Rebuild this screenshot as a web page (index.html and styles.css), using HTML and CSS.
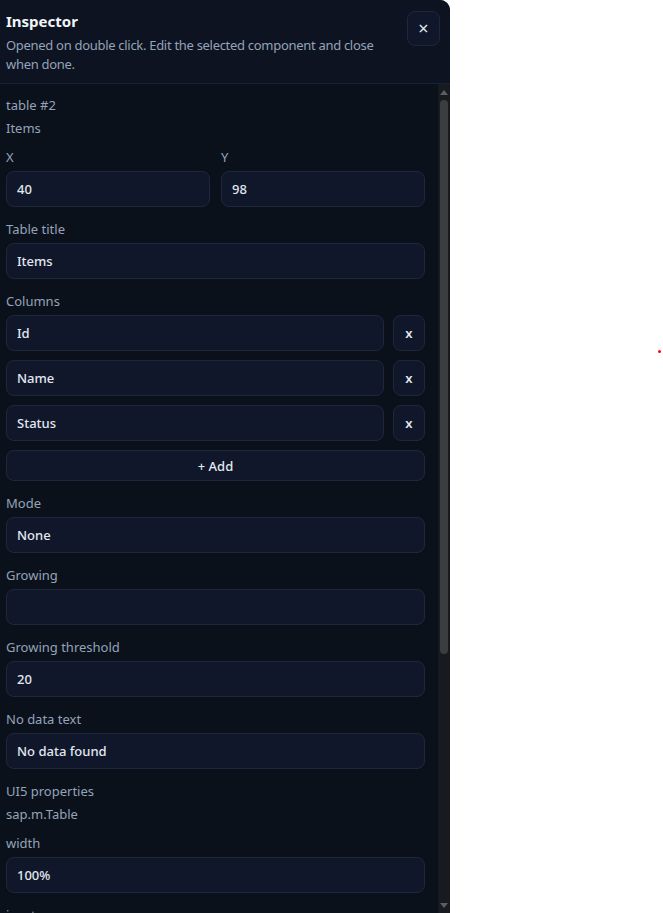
FILE: index.html
```html
<!DOCTYPE html>
<html lang="en">
<head>
  <meta charset="UTF-8">
  <title>Inspector</title>
  <link rel="stylesheet" href="styles.css">
</head>
<body>

<aside class="inspector">
  <header class="inspector-head">
    <div>
      <h2 class="inspector-title">Inspector</h2>
      <p class="inspector-desc">Opened on double click. Edit the selected component and close when done.</p>
    </div>
    <button class="close-btn" aria-label="Close">&times;</button>
  </header>

  <div class="inspector-main">
    <div class="inspector-body">
      <div class="meta">
        <span>table #2</span>
        <span>Items</span>
      </div>

      <div class="row-2">
        <label class="field">
          <span class="field-label">X</span>
          <input class="input" type="text" value="40">
        </label>
        <label class="field">
          <span class="field-label">Y</span>
          <input class="input" type="text" value="98">
        </label>
      </div>

      <label class="field">
        <span class="field-label">Table title</span>
        <input class="input" type="text" value="Items">
      </label>

      <div class="field">
        <span class="field-label">Columns</span>
        <div class="columns">
          <div class="col-row">
            <input class="input" type="text" value="Id">
            <button class="small-btn">x</button>
          </div>
          <div class="col-row">
            <input class="input" type="text" value="Name">
            <button class="small-btn">x</button>
          </div>
          <div class="col-row">
            <input class="input" type="text" value="Status">
            <button class="small-btn">x</button>
          </div>
          <button class="add-btn">+ Add</button>
        </div>
      </div>

      <label class="field">
        <span class="field-label">Mode</span>
        <input class="input" type="text" value="None">
      </label>

      <label class="field">
        <span class="field-label">Growing</span>
        <input class="input" type="text" value="">
      </label>

      <label class="field">
        <span class="field-label">Growing threshold</span>
        <input class="input" type="text" value="20">
      </label>

      <label class="field">
        <span class="field-label">No data text</span>
        <input class="input" type="text" value="No data found">
      </label>

      <div class="meta">
        <span>UI5 properties</span>
        <span>sap.m.Table</span>
      </div>

      <label class="field">
        <span class="field-label">width</span>
        <input class="input" type="text" value="100%">
      </label>

      <label class="field">
        <span class="field-label">inset</span>
        <input class="input" type="text" value="false">
      </label>

      <label class="field">
        <span class="field-label">sticky</span>
        <input class="input" type="text" value="">
      </label>
    </div>

    <div class="scrollbar">
      <span class="sb-arrow sb-up"></span>
      <div class="sb-track">
        <div class="sb-thumb"></div>
      </div>
      <span class="sb-arrow sb-down"></span>
    </div>
  </div>
</aside>

<div class="marker"></div>

</body>
</html>
```

FILE: styles.css
```css
* {
  box-sizing: border-box;
}
body {
  margin: 0;
  background: #fff;
  font-family: "Noto Sans", "Open Sans", sans-serif;
  font-size: 13px;
}
.inspector {
  width: 450px;
  height: 913px;
  background: #0b111b;
  border-top-right-radius: 10px;
  display: flex;
  flex-direction: column;
  overflow: hidden;
}
.inspector-head {
  display: flex;
  justify-content: space-between;
  align-items: flex-start;
  gap: 8px;
  padding: 11px 10px 9px 6px;
  border-bottom: 1px solid #1a2231;
  background: #0d1320;
}
.inspector-title {
  margin: 0;
  font-size: 15px;
  line-height: 20px;
  font-weight: 700;
  color: #f1f5f9;
}
.inspector-desc {
  margin: 5px 0 0;
  max-width: 385px;
  font-size: 13px;
  line-height: 19px;
  letter-spacing: -0.3px;
  color: #94a3b8;
}
.close-btn {
  flex: 0 0 33px;
  height: 35px;
  border: 1px solid #1f283b;
  border-radius: 8px;
  background: #10172b;
  color: #e2e8f0;
  font-size: 18px;
  line-height: 1;
  font-family: inherit;
  padding: 0 0 2px;
}
.inspector-main {
  flex: 1;
  min-height: 0;
  display: flex;
}
.inspector-body {
  flex: 1;
  overflow: hidden;
  padding: 13px 13px 20px 6px;
  display: flex;
  flex-direction: column;
  gap: 14px;
}
.meta {
  display: flex;
  flex-direction: column;
  gap: 7px;
  margin-bottom: -1px;
  color: #94a3b8;
  line-height: 16px;
}
.row-2 {
  display: grid;
  grid-template-columns: 1fr 1fr;
  gap: 11px;
}
.field {
  display: flex;
  flex-direction: column;
}
.field-label {
  color: #94a3b8;
  line-height: 16px;
  margin-bottom: 6px;
}
.input {
  width: 100%;
  height: 36px;
  padding: 0 10px;
  border: 1px solid #1f283b;
  border-radius: 8px;
  background: #10172b;
  color: #e2e8f0;
  font-family: inherit;
  font-size: 13px;
  font-weight: 500;
  outline: none;
}
.columns {
  display: flex;
  flex-direction: column;
  gap: 9px;
}
.col-row {
  display: flex;
  gap: 9px;
}
.small-btn {
  flex: 0 0 32px;
  height: 36px;
  border: 1px solid #1f283b;
  border-radius: 8px;
  background: #10172b;
  color: #e2e8f0;
  font-family: inherit;
  font-size: 13px;
  font-weight: 600;
}
.add-btn {
  height: 31px;
  border: 1px solid #1f283b;
  border-radius: 8px;
  background: #10172b;
  color: #e2e8f0;
  font-family: inherit;
  font-size: 13px;
  font-weight: 500;
}

/* scrollbar drawn next to the content */
.scrollbar {
  width: 12px;
  background: #171a1f;
  display: flex;
  flex-direction: column;
  align-items: center;
  padding: 4px 0 3px;
}
.sb-arrow {
  width: 0;
  height: 0;
  border-left: 4px solid transparent;
  border-right: 4px solid transparent;
}
.sb-up {
  border-bottom: 5px solid #5a5d62;
  margin-top: 2px;
}
.sb-down {
  border-top: 5px solid #5a5d62;
  margin-bottom: 2px;
}
.sb-track {
  flex: 1;
  width: 100%;
  padding: 5px 2px 0;
}
.sb-thumb {
  height: 554px;
  border-radius: 4px;
  background: #3b3d41;
}
.marker {
  position: absolute;
  left: 658px;
  top: 350px;
  width: 3px;
  height: 3px;
  border-radius: 50%;
  background: #ff0000;
}
```
